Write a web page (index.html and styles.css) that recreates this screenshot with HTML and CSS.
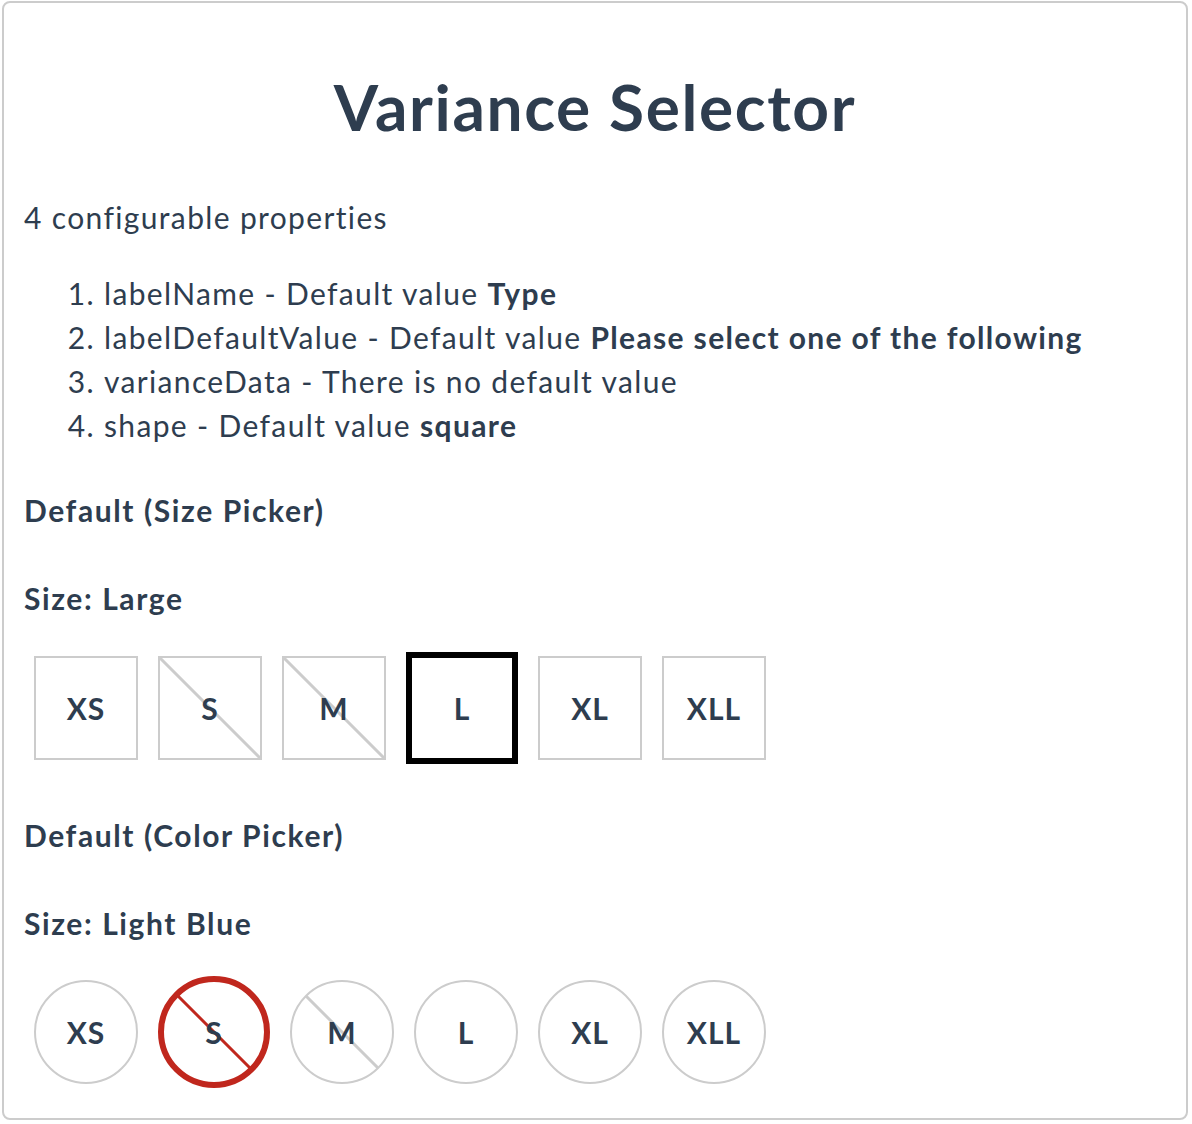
FILE: index.html
```html
<!DOCTYPE html>
<html>
<head>
<meta charset="utf-8">
<link rel="stylesheet" href="styles.css">
</head>
<body>
<div class="card">
  <h1 class="title">Variance Selector</h1>
  <p class="intro">4 configurable properties</p>
  <ol class="props">
    <li>labelName - Default value <b>Type</b></li>
    <li>labelDefaultValue - Default value <b>Please select one of the following</b></li>
    <li>varianceData - There is no default value</li>
    <li>shape - Default value <b>square</b></li>
  </ol>

  <h2 class="section">Default (Size Picker)</h2>
  <div class="label">Size: Large</div>
  <div class="options">
    <div class="opt">XS</div>
    <div class="opt na">S</div>
    <div class="opt na">M</div>
    <div class="opt sel">L</div>
    <div class="opt">XL</div>
    <div class="opt">XLL</div>
  </div>

  <h2 class="section">Default (Color Picker)</h2>
  <div class="label">Size: Light Blue</div>
  <div class="options round">
    <div class="opt">XS</div>
    <div class="opt na sel-red">S</div>
    <div class="opt na">M</div>
    <div class="opt">L</div>
    <div class="opt">XL</div>
    <div class="opt">XLL</div>
  </div>
</div>
</body>
</html>
```

FILE: styles.css
```css
* { box-sizing: border-box; }
html, body { margin: 0; padding: 0; background: #fff; }
body {
  font-family: Lato, "Noto Sans", "Liberation Sans", sans-serif;
  color: #2e3d4f;
}
.card {
  margin: 1px 4px 4px 2px;
  height: 1119px;
  border: 2px solid #cccccc;
  border-radius: 8px;
  padding: 0 20px;
}
.title {
  margin: 0;
  padding-top: 67px;
  text-align: center;
  font-size: 64px;
  line-height: 74px;
  font-weight: 700;
  letter-spacing: 1.6px;
}
.intro {
  margin: 53px 0 0;
  font-size: 30px;
  line-height: 40px;
  letter-spacing: 1.35px;
}
.props {
  margin: 34px 0 0;
  padding-left: 80px;
  font-size: 30px;
  line-height: 44px;
  letter-spacing: 1.35px;
}
.props b { font-weight: 700; }
.section {
  margin: 43px 0 0;
  font-size: 30px;
  line-height: 40px;
  font-weight: 700;
  letter-spacing: 1.6px;
}
.label {
  margin-top: 48px;
  font-size: 30px;
  line-height: 40px;
  font-weight: 700;
  letter-spacing: 1.6px;
}
.options {
  display: flex;
  align-items: center;
  margin-top: 24px;
  height: 132px;
}
.opt {
  width: 104px;
  height: 104px;
  margin: 0 10px;
  border: 2px solid #cccccc;
  display: flex;
  align-items: center;
  justify-content: center;
  font-size: 30px;
  font-weight: 700;
  letter-spacing: 1px;
  background: #fff;
}
.opt.na {
  background: linear-gradient(to top right, transparent calc(50% - 2px), #cccccc calc(50% - 1px), #cccccc calc(50% + 1px), transparent calc(50% + 2px));
}
.opt.sel {
  width: 112px;
  height: 112px;
  border: 6px solid #000;
}
.round .opt { border-radius: 50%; }
.round .opt.sel-red {
  width: 112px;
  height: 112px;
  border: 6px solid #c0271d;
  background: linear-gradient(to top right, transparent calc(50% - 2px), #c0271d calc(50% - 1px), #c0271d calc(50% + 1px), transparent calc(50% + 2px));
}
.options + .section { margin-top: 41px; }
.options + .section + .label + .options { margin-top: 23px; }
```
